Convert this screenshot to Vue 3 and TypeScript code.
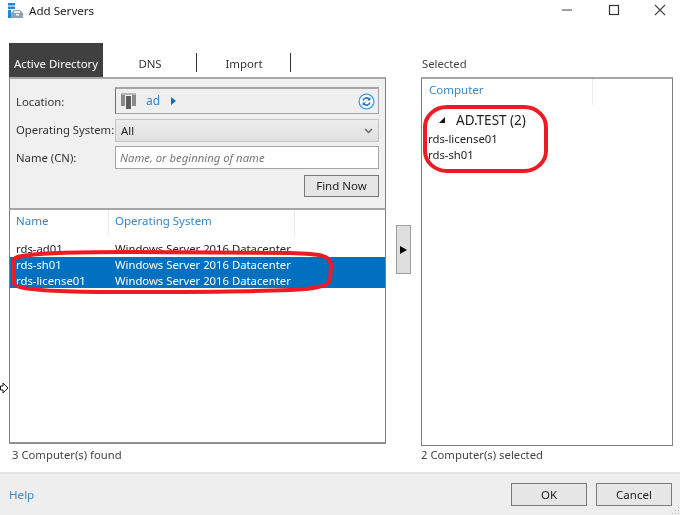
<script setup lang="ts">
const results = [
  { name: 'rds-ad01', os: 'Windows Server 2016 Datacenter', selected: false },
  { name: 'rds-sh01', os: 'Windows Server 2016 Datacenter', selected: true },
  { name: 'rds-license01', os: 'Windows Server 2016 Datacenter', selected: true },
]
const chosen = ['rds-license01', 'rds-sh01']
</script>

<template>
  <div class="window">
    <header class="titlebar">
      <svg class="app-icon" width="16" height="16" viewBox="0 0 16 16">
        <rect x="0" y="1" width="7" height="2.5" fill="#1e88d8" />
        <rect x="0" y="4.5" width="7" height="2.5" fill="#1e88d8" />
        <rect x="0" y="8" width="3" height="8" fill="#1e88d8" />
        <path d="M3 11 L6 8 H12 L15 11 V16 H3 Z" fill="#8fa3b0" />
        <rect x="6" y="9" width="6" height="2" fill="#e8eef2" />
        <rect x="8" y="12" width="3" height="1.5" fill="#ffffff" />
      </svg>
      <span class="title">Add Servers</span>
      <div class="controls">
        <svg width="46" height="20" viewBox="0 0 46 20"><path d="M20 10 H30" stroke="#808080" stroke-width="1.5" /></svg>
        <svg width="46" height="20" viewBox="0 0 46 20"><rect x="21.5" y="5.5" width="9" height="9" fill="none" stroke="#333" stroke-width="1.2" /></svg>
        <svg width="46" height="20" viewBox="0 0 46 20"><path d="M21 5 L31 15 M31 5 L21 15" stroke="#444" stroke-width="1.1" /></svg>
      </div>
    </header>

    <main class="content">
      <section class="left">
        <nav class="tabs">
          <span class="tab active">Active Directory</span>
          <span class="tab sep">DNS</span>
          <span class="tab sep">Import</span>
        </nav>
        <div class="search">
          <div class="form-row location-row">
            <label>Location:</label>
            <div class="field location">
              <svg class="server" width="16" height="16" viewBox="0 0 16 16">
                <rect x="0" y="0" width="15" height="2" fill="#b4b4b4" />
                <rect x="0" y="2" width="4" height="11" fill="#8a8a8a" />
                <rect x="11" y="2" width="4" height="11" fill="#8a8a8a" />
                <rect x="4" y="2" width="1" height="14" fill="#f0f0f0" />
                <rect x="10" y="2" width="1" height="14" fill="#f0f0f0" />
                <rect x="5" y="3" width="5" height="13" fill="#5c5c5c" />
              </svg>
              <span class="ad">ad</span>
              <span class="caret"></span>
              <svg class="refresh" width="17" height="17" viewBox="0 0 17 17">
                <circle cx="8.5" cy="8.5" r="7.4" fill="#fff" stroke="#4aa0dc" stroke-width="1.4" />
                <path d="M5 7.6 A3.7 3.7 0 0 1 11 5.8 M12 9.4 A3.7 3.7 0 0 1 6 11.2" fill="none" stroke="#2478b8" stroke-width="1.6" />
                <path d="M12.4 4 V7.4 H9 Z M4.6 13 V9.6 H8 Z" fill="#2478b8" />
              </svg>
            </div>
          </div>
          <div class="form-row os-row">
            <label>Operating System:</label>
            <div class="field select">
              <span>All</span>
              <svg width="9" height="6" viewBox="0 0 9 6"><path d="M1 1 L4.5 4.5 L8 1" fill="none" stroke="#666" stroke-width="1.4" /></svg>
            </div>
          </div>
          <div class="form-row name-row">
            <label>Name (CN):</label>
            <div class="field input">Name, or beginning of name</div>
          </div>
          <div class="find-row"><button class="btn find">Find Now</button></div>
        </div>
        <div class="list">
          <div class="list-head">
            <span class="col-name">Name</span>
            <span class="col-os">Operating System</span>
          </div>
          <div v-for="r in results" :key="r.name" class="row" :class="{ selected: r.selected }">
            <span class="cell-name">{{ r.name }}</span>
            <span>{{ r.os }}</span>
          </div>
        </div>
        <div class="status">3 Computer(s) found</div>
      </section>

      <div class="middle">
        <button class="move"><span></span></button>
      </div>

      <section class="right">
        <div class="selected-label">Selected</div>
        <div class="selected-list">
          <div class="selected-head"><span>Computer</span></div>
          <div class="group"><i></i>AD.TEST (2)</div>
          <div v-for="c in chosen" :key="c" class="chosen">{{ c }}</div>
        </div>
        <div class="status right-status">2 Computer(s) selected</div>
      </section>
    </main>

    <footer class="footer">
      <span class="help">Help</span>
      <div class="actions">
        <button class="btn action">OK</button>
        <button class="btn action">Cancel</button>
      </div>
      <svg class="grip" width="8" height="8" viewBox="0 0 8 8">
        <path d="M6 0h1v1H6zM6 3h1v1H6zM3 3h1v1H3zM6 6h1v1H6zM3 6h1v1H3zM0 6h1v1H0z" fill="#bdbdbd" />
      </svg>
    </footer>

    <svg class="cursor" width="9" height="12" viewBox="0 0 9 12">
      <path d="M0.5 4 H3 V1 L8 6 L3 11 V8 H0.5 Z" fill="#fff" stroke="#000" stroke-width="0.9" />
    </svg>
    <svg class="annotations" width="680" height="515" viewBox="0 0 680 515">
      <path d="M30 255 C50 252 90 252 130 252 L290 253 C320 254 331 255 331 265 L330 280 C329 287 310 289 290 290 C240 292 100 293 60 291 C30 290 14 288 13 282 L13 262 C13 257 20 256 30 255 Z" />
      <rect x="425" y="107" width="121" height="64" rx="22" ry="20" />
    </svg>
  </div>
</template>

<style>
html, body { margin: 0; background: #fff; }
</style>

<style scoped>
.window {
  position: relative;
  width: 680px;
  height: 515px;
  overflow: hidden;
  display: flex;
  flex-direction: column;
  background: #fff;
  color: #222;
  font: 11.3px/16px "Noto Sans", "Open Sans", sans-serif;
  filter: blur(0.3px);
}
.titlebar { height: 20px; display: flex; align-items: center; padding-left: 8px; flex: none; }
.app-icon { flex: none; margin-right: 5px; }
.title { color: #1a1a1a; font-size: 11.6px; padding-top: 2px; }
.controls { margin-left: auto; display: flex; }
.content { flex: 1; display: grid; grid-template-columns: 377px 35px 252px; padding: 23px 7px 0 9px; min-height: 0; }
.left { display: flex; flex-direction: column; min-height: 0; }
.tabs { display: flex; height: 34px; flex: none; }
.tab { width: 94px; display: flex; align-items: center; justify-content: center; padding-top: 8px; box-sizing: border-box; color: #333; font-size: 11.4px; position: relative; }
.tab.active { background: #404040; color: #fff; }
.tab.sep::after { content: ""; position: absolute; right: 0; top: 10px; height: 19px; width: 1px; background: #333; }
.search {
  height: 131px;
  flex: none;
  box-sizing: border-box;
  background: #f0f0f0;
  border-top: 2px solid #a6a6a6;
  border-left: 1px solid #808080;
  border-right: 1px solid #808080;
  padding: 8px 6px 0 6px;
}
.form-row { display: flex; align-items: center; }
.form-row label { width: 99px; flex: none; color: #333; white-space: nowrap; }
.location-row label { padding-top: 2px; }
.os-row label { padding-bottom: 2px; }
.field { box-sizing: border-box; flex: 1; display: flex; align-items: center; }
.location-row { height: 27px; }
.os-row { height: 23px; margin-top: 5px; }
.name-row { height: 23px; margin-top: 4px; }
.location {
  height: 27px;
  background: #efefef;
  border: 1px solid #a6a6a6;
  border-top-width: 2px;
  border-left-color: #707070;
  padding-left: 5px;
}
.server { flex: none; }
.ad { color: #3a86c4; margin-left: 9px; font-size: 12px; }
.caret { width: 0; height: 0; margin-left: 11px; border-left: 5px solid #0f70bd; border-top: 4px solid transparent; border-bottom: 4px solid transparent; }
.refresh { margin-left: auto; margin-right: 3px; }
.select {
  height: 23px;
  background: linear-gradient(#ececec, #e0e0e0);
  border: 1px solid #c4c4c4;
  padding: 0 5px 0 5px;
  justify-content: space-between;
  color: #222;
}
.input {
  height: 23px;
  background: #fff;
  border: 1px solid #a6a6a6;
  padding-left: 4px;
  color: #777;
  font-style: italic;
}
.find-row { display: flex; justify-content: flex-end; margin-top: 6px; }
.btn {
  box-sizing: border-box;
  background: #e6e6e6;
  border: 1px solid #7a7a7a;
  color: #222;
  font: inherit;
  font-size: 11.5px;
  padding: 0;
}
.find { width: 75px; height: 22px; }
.list {
  height: 236px;
  flex: none;
  box-sizing: border-box;
  border-top: 2px solid #a6a6a6;
  border-left: 1px solid #808080;
  border-right: 1px solid #808080;
  border-bottom: 2px solid #909090;
}
.list-head { height: 31px; display: flex; color: #3a86c4; box-sizing: border-box; font-size: 11.5px; }
.col-name { width: 99px; padding-left: 6px; box-sizing: border-box; border-right: 1px solid #ececec; height: 26px; line-height: 22px; }
.col-os { width: 186px; padding-left: 6px; box-sizing: border-box; border-right: 1px solid #ececec; height: 26px; line-height: 22px; }
.row { height: 16px; display: flex; padding-left: 6px; color: #222; white-space: nowrap; }
.row:last-child { height: 15px; }
.cell-name { width: 99px; flex: none; }
.row.selected { background: #0070bf; color: #fff; }
.status { height: 29px; line-height: 22px; padding-left: 3px; color: #444; flex: none; }
.middle { display: flex; align-items: flex-start; padding-left: 10px; padding-top: 182px; }
.move { width: 15px; height: 49px; padding: 0; box-sizing: border-box; background: #dedede; border: 1px solid #a0a0a0; display: flex; align-items: center; justify-content: center; }
.move span { width: 0; height: 0; border-left: 7px solid #000; border-top: 4px solid transparent; border-bottom: 4px solid transparent; }
.right { display: flex; flex-direction: column; min-height: 0; position: relative; }
.selected-label { height: 34px; box-sizing: border-box; padding-top: 13px; color: #444; flex: none; margin-left: 1px; }
.selected-list {
  height: 369px;
  flex: none;
  box-sizing: border-box;
  border: 1px solid #808080;
  border-top: 2px solid #a6a6a6;
  padding-left: 7px;
}
.selected-head { height: 26px; width: 171px; margin-left: -7px; padding-left: 7px; box-sizing: border-box; color: #3a86c4; line-height: 22px; border-right: 1px solid #ececec; font-size: 11.5px; }
.group { margin-top: 4px; margin-left: 10px; height: 22px; line-height: 22px; font-size: 13.5px; color: #222; display: flex; align-items: center; }
.group i { width: 0; height: 0; margin-right: 11px; border-left: 6px solid transparent; border-bottom: 6px solid #111; }
.chosen { height: 16px; color: #222; margin-left: -1px; }
.right-status { height: 27px; line-height: 18px; padding-left: 0; }
.footer {
  height: 43px;
  flex: none;
  box-sizing: border-box;
  position: relative;
  background: #eeeeee;
  border-top: 2px solid #e4e4e4;
  display: flex;
  align-items: center;
  justify-content: space-between;
  padding: 0 8px 0 9px;
}
.help { color: #3a86c4; font-size: 11.6px; }
.actions { display: flex; gap: 9px; }
.action { width: 76px; height: 23px; }
.grip { position: absolute; right: 0; bottom: 0; }
.cursor { position: absolute; left: 0; top: 382px; }
.annotations { position: absolute; inset: 0; pointer-events: none; }
.annotations path, .annotations rect { fill: none; stroke: #ed1c24; stroke-width: 4; }
</style>
